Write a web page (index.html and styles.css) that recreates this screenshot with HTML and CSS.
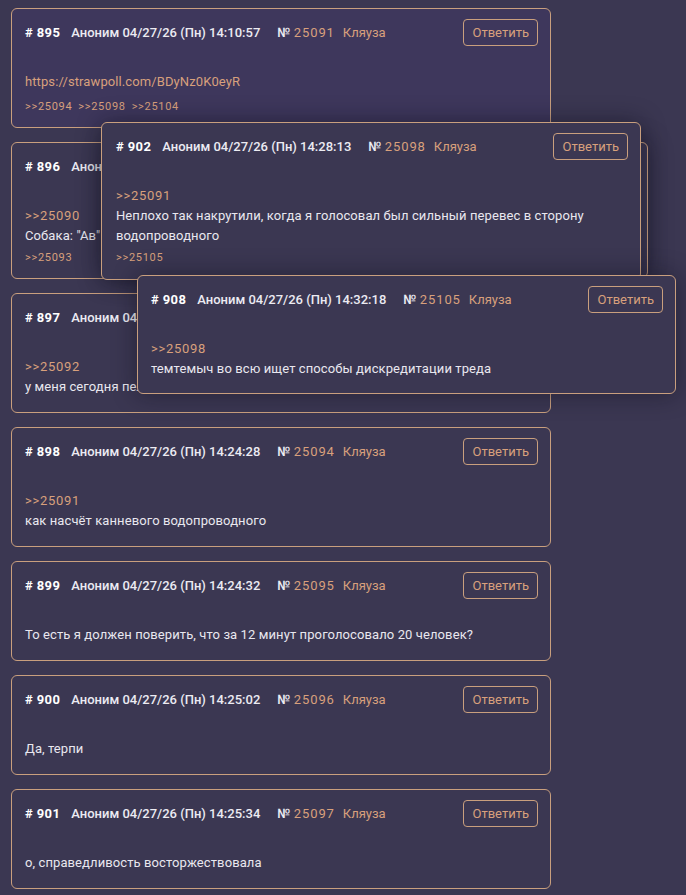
FILE: index.html
```html
<!DOCTYPE html>
<html lang="ru">
<head>
<meta charset="utf-8">
<title>Тред</title>
<link rel="stylesheet" href="styles.css">
</head>
<body>
<div class="thread">
  <div class="post post-hl">
    <div class="post-head">
      <span class="num"># 895</span>
      <span class="meta">Аноним 04/27/26 (Пн) 14:10:57</span>
      <span class="no">№ <span class="tan">25091</span></span>
      <span class="report">Кляуза</span>
      <button class="reply">Ответить</button>
    </div>
    <div class="post-body">
      <a class="link">https://strawpoll.com/BDyNz0K0eyR</a>
    </div>
    <div class="backlinks"><a>&gt;&gt;25094</a><a>&gt;&gt;25098</a><a>&gt;&gt;25104</a></div>
  </div>

  <div class="post">
    <div class="post-head">
      <span class="num"># 896</span>
      <span class="meta">Аноним 04/27/26 (Пн) 14:12:40</span>
      <span class="no">№ <span class="tan">25092</span></span>
      <span class="report">Кляуза</span>
      <button class="reply">Ответить</button>
    </div>
    <div class="post-body">
      <a class="link quote">&gt;&gt;25090</a><br>
      Собака: "Ав"
    </div>
    <div class="backlinks"><a>&gt;&gt;25093</a></div>
  </div>

  <div class="post">
    <div class="post-head">
      <span class="num"># 897</span>
      <span class="meta">Аноним 04/27/26 (Пн) 14:13:55</span>
      <span class="no">№ <span class="tan">25093</span></span>
      <span class="report">Кляуза</span>
      <button class="reply">Ответить</button>
    </div>
    <div class="post-body">
      <a class="link quote">&gt;&gt;25092</a><br>
      у меня сегодня пельмени
    </div>
  </div>

  <div class="post">
    <div class="post-head">
      <span class="num"># 898</span>
      <span class="meta">Аноним 04/27/26 (Пн) 14:24:28</span>
      <span class="no">№ <span class="tan">25094</span></span>
      <span class="report">Кляуза</span>
      <button class="reply">Ответить</button>
    </div>
    <div class="post-body">
      <a class="link quote">&gt;&gt;25091</a><br>
      как насчёт канневого водопроводного
    </div>
  </div>

  <div class="post">
    <div class="post-head">
      <span class="num"># 899</span>
      <span class="meta">Аноним 04/27/26 (Пн) 14:24:32</span>
      <span class="no">№ <span class="tan">25095</span></span>
      <span class="report">Кляуза</span>
      <button class="reply">Ответить</button>
    </div>
    <div class="post-body">То есть я должен поверить, что за 12 минут проголосовало 20 человек?</div>
  </div>

  <div class="post">
    <div class="post-head">
      <span class="num"># 900</span>
      <span class="meta">Аноним 04/27/26 (Пн) 14:25:02</span>
      <span class="no">№ <span class="tan">25096</span></span>
      <span class="report">Кляуза</span>
      <button class="reply">Ответить</button>
    </div>
    <div class="post-body">Да, терпи</div>
  </div>

  <div class="post">
    <div class="post-head">
      <span class="num"># 901</span>
      <span class="meta">Аноним 04/27/26 (Пн) 14:25:34</span>
      <span class="no">№ <span class="tan">25097</span></span>
      <span class="report">Кляуза</span>
      <button class="reply">Ответить</button>
    </div>
    <div class="post-body">о, справедливость восторжествовала</div>
  </div>

  <div class="post popup popup-back"></div>

  <div class="post popup popup-902">
    <div class="post-head">
      <span class="num"># 902</span>
      <span class="meta">Аноним 04/27/26 (Пн) 14:28:13</span>
      <span class="no">№ <span class="tan">25098</span></span>
      <span class="report">Кляуза</span>
      <button class="reply">Ответить</button>
    </div>
    <div class="post-body">
      <a class="link quote">&gt;&gt;25091</a><br>
      Неплохо так накрутили, когда я голосовал был сильный перевес в сторону водопроводного
    </div>
    <div class="backlinks"><a>&gt;&gt;25105</a></div>
  </div>

  <div class="post popup popup-908">
    <div class="post-head">
      <span class="num"># 908</span>
      <span class="meta">Аноним 04/27/26 (Пн) 14:32:18</span>
      <span class="no">№ <span class="tan">25105</span></span>
      <span class="report">Кляуза</span>
      <button class="reply">Ответить</button>
    </div>
    <div class="post-body">
      <a class="link quote">&gt;&gt;25098</a><br>
      темтемыч во всю ищет способы дискредитации треда
    </div>
  </div>
</div>
</body>
</html>
```

FILE: styles.css
```css
html, body {
  margin: 0;
  padding: 0;
  background: #3b3752;
}

body {
  font-family: Roboto, "Noto Sans", "Liberation Sans", sans-serif;
  font-size: 13px;
  color: #e9e7ef;
}

.thread {
  position: relative;
  padding: 8px 0 0 11px;
}

.post {
  width: 540px;
  box-sizing: border-box;
  border: 1px solid #c99f7e;
  border-radius: 6px;
  background: #3b3752;
  padding: 10px 12px 15px 13px;
  margin-bottom: 14px;
}

.post-hl {
  background: #3e375c;
}

.post-head {
  display: flex;
  align-items: center;
  height: 27px;
  white-space: nowrap;
}

.num {
  font-weight: 700;
  color: #ffffff;
  letter-spacing: 0.4px;
  margin-right: 11px;
}

.meta {
  font-weight: 500;
  color: #ecebf2;
  margin-right: 17px;
}

.no {
  font-weight: 500;
  color: #ecebf2;
  margin-right: 8px;
}

.tan {
  font-weight: 400;
  color: #d8a07c;
  letter-spacing: 0.9px;
}

.report {
  color: #d8a07c;
}

.reply {
  margin-left: auto;
  height: 27px;
  padding: 0 8px;
  box-sizing: border-box;
  border: 1px solid #c99f7e;
  border-radius: 4px;
  background: transparent;
  color: #d8a07c;
  font-family: inherit;
  font-size: 13px;
  cursor: pointer;
}

.post-body {
  margin-top: 26px;
  line-height: 20px;
  letter-spacing: 0.1px;
}

.link {
  color: #d8a07c;
  text-decoration: none;
}

.quote {
  letter-spacing: 0.7px;
}

.backlinks {
  margin-top: 4px;
  margin-bottom: -3px;
  line-height: 16px;
  font-size: 11px;
  letter-spacing: 0.7px;
  display: flex;
  gap: 6px;
}

.post-hl .backlinks {
  margin-top: 7px;
}

.backlinks a {
  color: #d8a07c;
}

.popup {
  position: absolute;
  margin: 0;
  box-shadow: 0 0 24px rgba(12, 10, 24, 0.45);
}

.popup-back {
  left: 108px;
  top: 142px;
  height: 136px;
}

.popup-902 {
  left: 101px;
  top: 122px;
  padding-left: 14px;
  padding-bottom: 16px;
}

.popup-908 {
  left: 137px;
  top: 275px;
  width: 539px;
  padding-bottom: 14px;
}
```
